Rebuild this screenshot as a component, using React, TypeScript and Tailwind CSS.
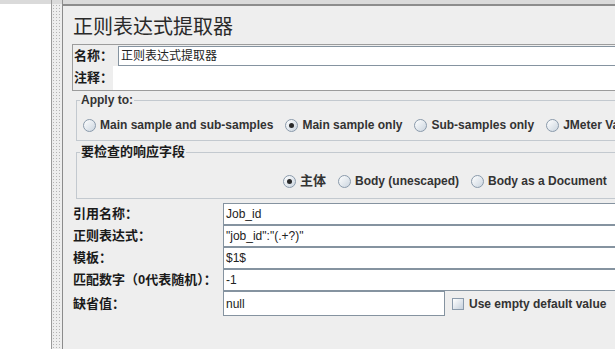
import React from "react";

const Radio = ({ checked }: { checked?: boolean }) => (
  <span className="w-[13px] h-[13px] rounded-full border border-[#8a9aab] bg-linear-to-br from-white to-[#cbd5df] flex items-center justify-center shrink-0">
    {checked && <span className="w-[5px] h-[5px] rounded-full bg-[#2a2a2a]" />}
  </span>
);

const RadioItem = ({ label, checked, cjk }: { label: string; checked?: boolean; cjk?: boolean }) => (
  <div className="flex items-center gap-[4px]">
    <Radio checked={checked} />
    <span
      className={`${cjk ? "text-[13px]" : "text-[12px]"} font-bold text-[#333] leading-[14px] whitespace-nowrap`}
    >
      {label}
    </span>
  </div>
);

const Field = ({ value, h = "h-[22px]", w = "w-[420px]" }: { value: string; h?: string; w?: string }) => (
  <div
    className={`${h} ${w} shrink-0 border border-[#8593a0] bg-white flex items-center pl-[2px] text-[12px] text-[#222] leading-[14px] whitespace-nowrap`}
  >
    {value}
  </div>
);

const Row = ({ label, children }: { label: string; children: React.ReactNode }) => (
  <div className="flex items-center">
    <div className="w-[151px] shrink-0 pl-[1px] text-[13px] font-bold text-[#1a1a1a] leading-[16px] whitespace-nowrap">
      {label}
    </div>
    {children}
  </div>
);

export default function App() {
  return (
    <div className="w-[615px] h-[349px] overflow-hidden flex bg-[#eeeeee] font-['Liberation_Sans','Noto_Sans_CJK_SC',sans-serif] text-[#222]">
      <div className="w-[52px] shrink-0 flex flex-col border-r border-[#9a9a9a]">
        <div className="h-[4px] bg-[#dadada]" />
        <div className="flex-1 bg-white" />
      </div>
      <div className="w-[11px] shrink-0 flex flex-col border-r border-[#8c8c8c]">
        <div className="h-[4px] bg-[#dadada]" />
        <div className="flex-1 bg-[#eeeeee] bg-[radial-gradient(circle,#b4b4b4_0.7px,transparent_0.8px)] bg-[length:3px_3px]" />
      </div>
      <div className="flex-1 min-w-0 flex flex-col">
        <div className="h-[4px] bg-[#dadada]" />
        <div className="h-[2px] bg-[#8c8c8c]" />
        <div className="pl-[9px] flex flex-col">
          <div className="pt-[9px] pl-[1px] h-[33px] text-[20px] leading-[24px] text-[#2a2a2a] whitespace-nowrap">
            正则表达式提取器
          </div>
          <div className="mt-[5px] w-[600px] border border-r-0 border-[#9c9c9c] flex flex-col">
            <div className="pt-[1px] flex items-center">
              <div className="w-[45px] shrink-0 pl-[1px] text-[13px] font-bold leading-[16px] text-[#1a1a1a]">名称：</div>
              <div className="flex-1 h-[20px] border border-[#8593a0] bg-white flex items-center pl-[2px] text-[12px] leading-[14px] text-[#222]">
                正则表达式提取器
              </div>
            </div>
            <div className="h-[24px] flex items-center">
              <div className="w-[40px] shrink-0 pl-[1px] text-[13px] font-bold leading-[16px] text-[#1a1a1a]">注释：</div>
              <div className="flex-1 h-full bg-white" />
            </div>
          </div>

          <fieldset className="mt-[2px] ml-[4px] w-[600px] border border-r-0 border-[#c3c9cf] px-[6px] pb-[8px]">
            <legend className="ml-[-3px] px-[1px] text-[12px] font-bold leading-[14px] text-[#333]">Apply to:</legend>
            <div className="mt-[11px] h-[14px] flex items-center gap-[12px]">
              <RadioItem label="Main sample and sub-samples" />
              <RadioItem label="Main sample only" checked />
              <RadioItem label="Sub-samples only" />
              <RadioItem label="JMeter Variable" />
            </div>
          </fieldset>

          <fieldset className="mt-[3px] ml-[4px] w-[600px] border border-r-0 border-[#c3c9cf] px-[6px] pb-[10px]">
            <legend className="ml-[-3px] px-[1px] text-[13px] font-bold leading-[16px] text-[#1a1a1a]">要检查的响应字段</legend>
            <div className="mt-[14px] h-[14px] pl-[200px] flex items-center gap-[12px]">
              <RadioItem label="主体" checked cjk />
              <RadioItem label="Body (unescaped)" />
              <RadioItem label="Body as a Document" />
            </div>
          </fieldset>

          <div className="mt-[4px] flex flex-col">
            <Row label="引用名称：">
              <Field value="Job_id" />
            </Row>
            <Row label="正则表达式：">
              <Field value={'"job_id":"(.+?)"'} />
            </Row>
            <Row label="模板：">
              <Field value="$1$" />
            </Row>
            <Row label="匹配数字（0代表随机）：">
              <Field value="-1" />
            </Row>
            <Row label="缺省值：">
              <Field value="null" h="h-[25px]" w="w-[222px]" />
              <div className="ml-[7px] w-[12px] h-[12px] border border-[#8a9aab] bg-linear-to-br from-white to-[#c5d0dc] shrink-0" />
              <span className="ml-[5px] text-[12px] font-bold leading-[14px] text-[#333] whitespace-nowrap">
                Use empty default value
              </span>
            </Row>
          </div>
        </div>
      </div>
    </div>
  );
}
